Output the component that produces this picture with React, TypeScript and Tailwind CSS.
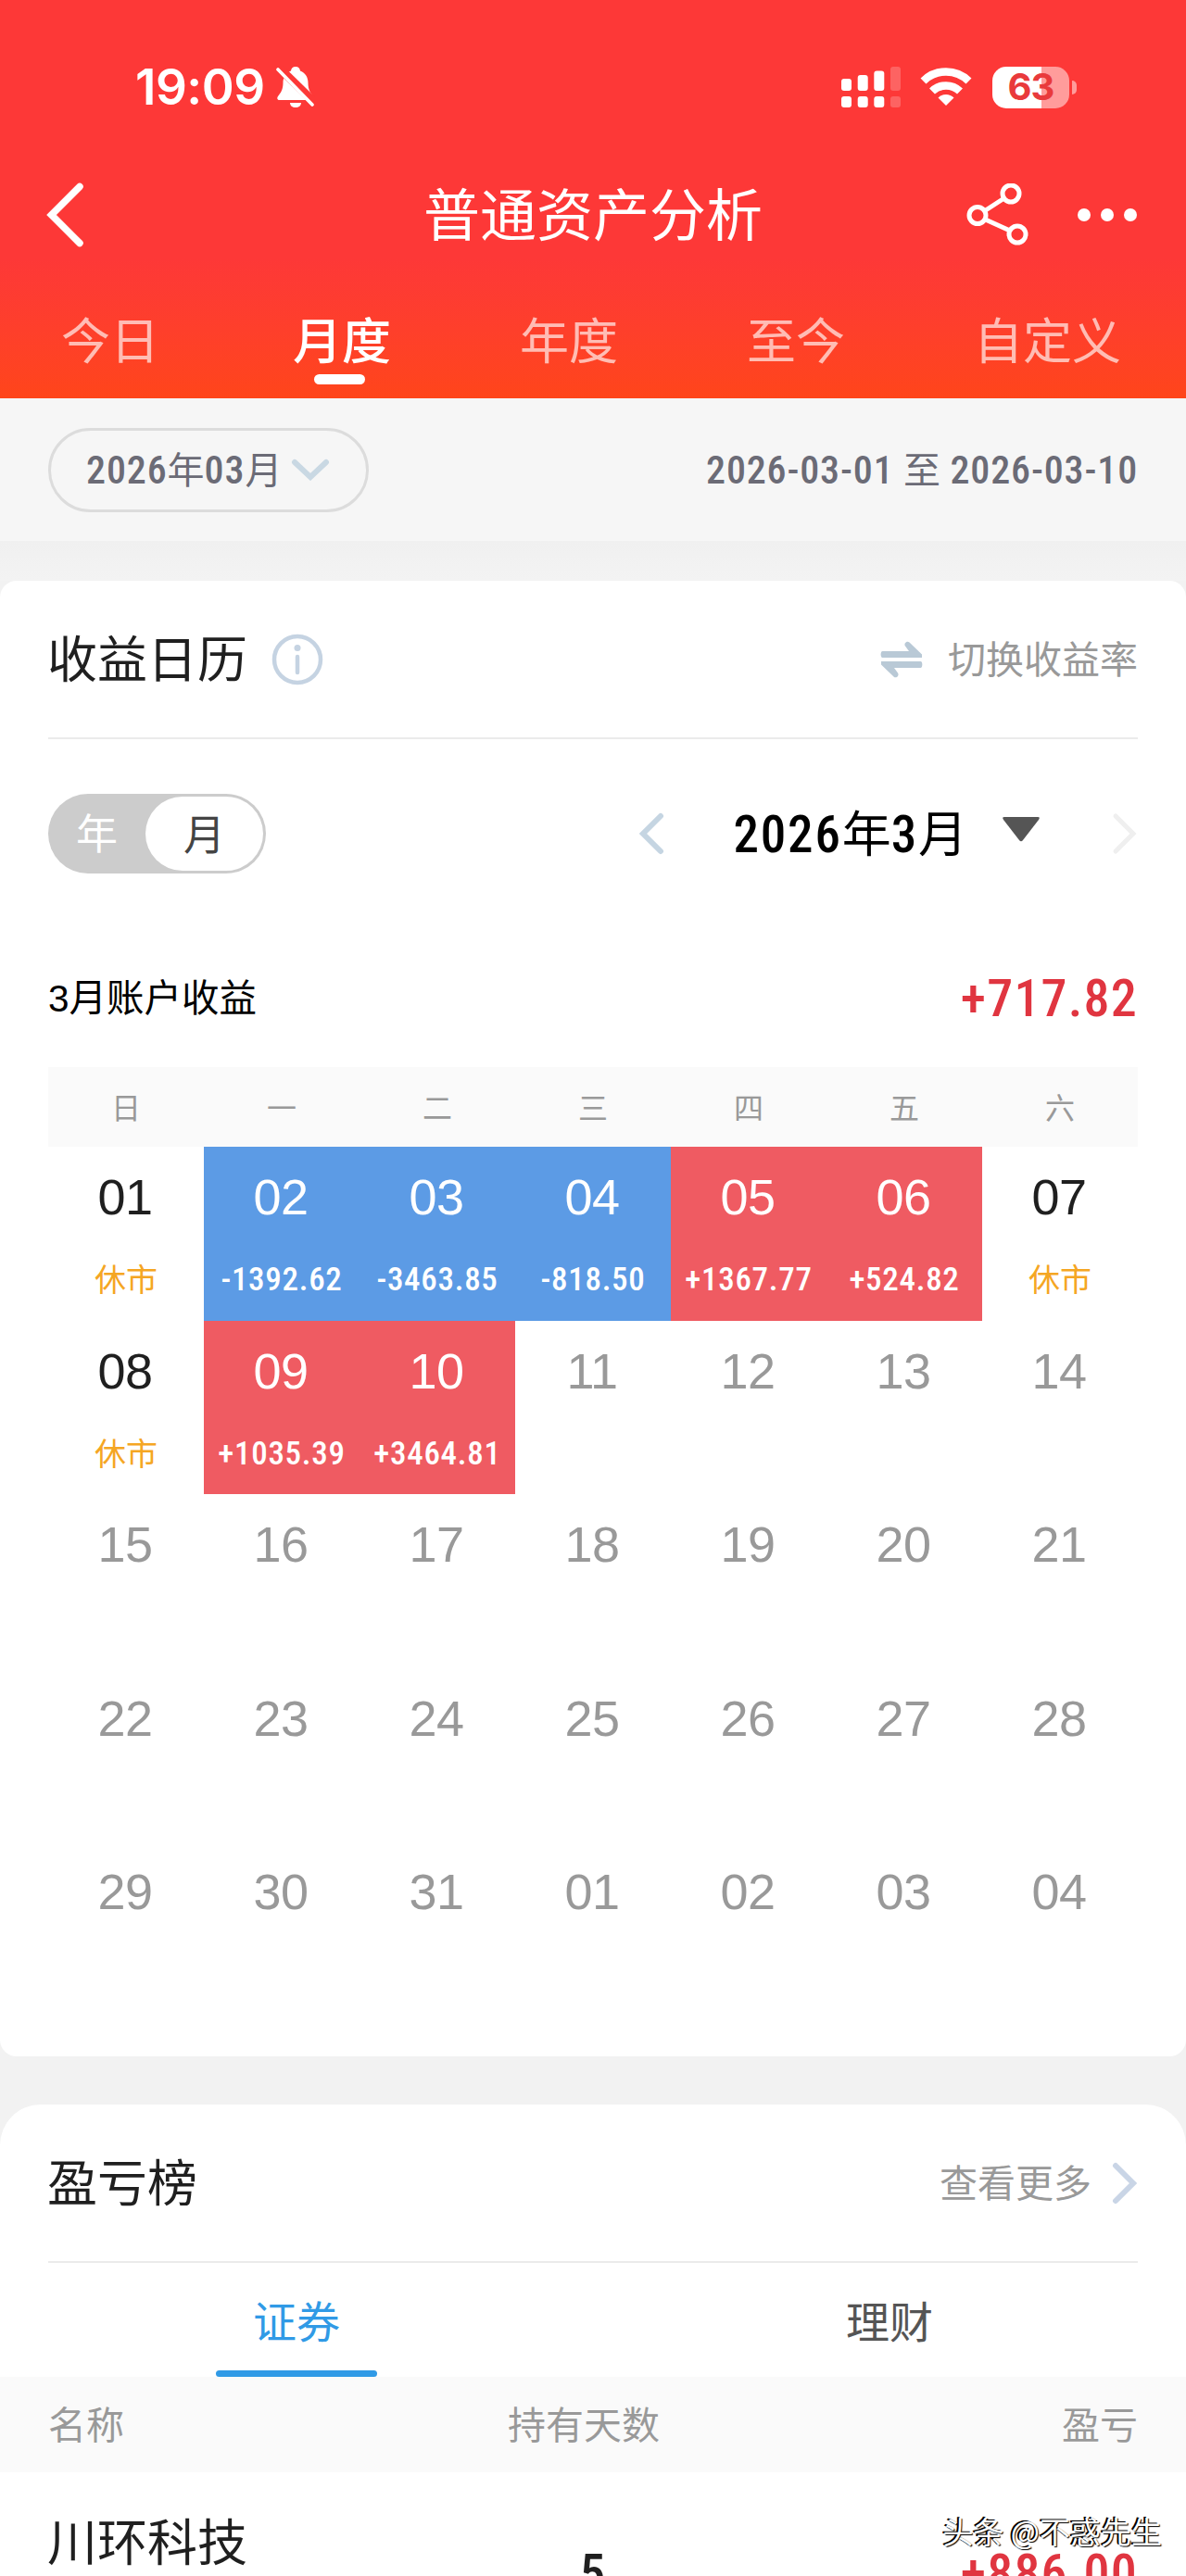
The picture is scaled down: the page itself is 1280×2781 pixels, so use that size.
import clsx from 'clsx'

type DayCell = {
  day: string
  value?: string
  kind: 'rest' | 'up' | 'down' | 'future'
}

const PERIODS = ['今日', '月度', '年度', '至今', '自定义']
const WEEKDAYS = ['日', '一', '二', '三', '四', '五', '六']

const MARKED: DayCell[] = [
  { day: '01', value: '休市', kind: 'rest' },
  { day: '02', value: '-1392.62', kind: 'down' },
  { day: '03', value: '-3463.85', kind: 'down' },
  { day: '04', value: '-818.50', kind: 'down' },
  { day: '05', value: '+1367.77', kind: 'up' },
  { day: '06', value: '+524.82', kind: 'up' },
  { day: '07', value: '休市', kind: 'rest' },
  { day: '08', value: '休市', kind: 'rest' },
  { day: '09', value: '+1035.39', kind: 'up' },
  { day: '10', value: '+3464.81', kind: 'up' },
]

const FUTURE = [
  '11', '12', '13', '14', '15', '16', '17', '18', '19', '20', '21', '22', '23',
  '24', '25', '26', '27', '28', '29', '30', '31', '01', '02', '03', '04',
]

const DAYS: DayCell[] = [...MARKED, ...FUTURE.map((day) => ({ day, kind: 'future' as const }))]

// condensed digits, used for every amount and date
const NUM = 'font-[Roboto,sans-serif] font-medium [font-stretch:80%]'
const HAN = "font-['Noto_Sans_CJK_SC',sans-serif] font-normal tracking-normal"

function Chevron({ className, dir = 'right', width = 6 }: { className?: string; dir?: 'left' | 'right'; width?: number }) {
  return (
    <svg className={className} viewBox="0 0 28 46" fill="none" stroke="currentColor" strokeWidth={width} strokeLinecap="round" strokeLinejoin="miter">
      <path d={dir === 'left' ? 'M24 4 5 23l19 19' : 'M4 4l19 19L4 42'} />
    </svg>
  )
}

function StatusBar() {
  return (
    <div className="flex h-[188px] items-center justify-between pr-[118px] pl-[146px] text-white">
      <div className="flex items-center gap-[12px]">
        <span className="font-[Inter,sans-serif] text-[53px] leading-none font-semibold tracking-[-0.500px]">19:09</span>
        <svg className="h-[46px] w-[42px]" viewBox="0 0 42 46">
          <path
            fill="currentColor"
            d="M21 1c-3 0-4.800 2-5 4.600C10 8 7.500 13 7.500 18.500 7.500 26 5 29 2 33c-1.500 2-.5 4 1.500 4h35c2 0 3-2 1.500-4-3-4-5.500-7-5.500-14.500C34.500 13 32 8 26 5.600 25.800 3 24 1 21 1zM15 40h12c0 3-2.600 5-6 5s-6-2-6-5z"
          />
          <path d="M0 -1 44 42" stroke="#fd3837" strokeWidth="9" />
          <path d="M2 4 39 42" stroke="currentColor" strokeWidth="3.600" strokeLinecap="round" />
        </svg>
      </div>
      <div className="flex items-center">
        <svg className="h-[44px] w-[64px]" viewBox="0 0 64 44" fill="currentColor">
          <rect x="0" y="13" width="11" height="13" rx="3" />
          <rect x="17.700" y="9" width="11" height="17" rx="3" />
          <rect x="35.300" y="4.500" width="11" height="21.500" rx="3" />
          <rect x="53" y="0" width="11" height="26" rx="3" opacity=".22" />
          <rect x="0" y="32" width="11" height="12" rx="3" />
          <rect x="17.700" y="32" width="11" height="12" rx="3" />
          <rect x="35.300" y="32" width="11" height="12" rx="3" />
          <rect x="53" y="32" width="11" height="12" rx="3" opacity=".22" />
        </svg>
        <svg className="ml-[21px] h-[42px] w-[56px]" viewBox="0 0 56 42" fill="none" stroke="currentColor" strokeWidth="8.500">
          <path d="M3.500 14.500a35 35 0 0 1 49 0" />
          <path d="M13 25.500a21.500 21.500 0 0 1 30 0" />
          <path d="M28 41 19.500 32.500a12 12 0 0 1 17 0z" fill="currentColor" stroke="none" />
        </svg>
        <div className="ml-[22px] flex h-[45px] w-[83px] items-center justify-center rounded-[15px] bg-linear-to-r from-white from-64% to-[#ff9c9b] to-64%">
          <span className="font-[Inter,sans-serif] text-[40px] leading-none font-bold tracking-[-1px] text-[#e93a3c]">63</span>
        </div>
        <div className="ml-[3px] h-[15px] w-[5px] rounded-r-full bg-[#ff9c9b]" />
      </div>
    </div>
  )
}

function Header() {
  return (
    <header className="h-[430px] bg-linear-to-b from-[#fd3837] from-65% to-[#ff451a]">
      <StatusBar />
      <div className="flex h-[88px] items-center px-[50px] text-white">
        <div className="flex-1">
          <svg className="h-[72px] w-[42px]" viewBox="0 0 42 72" fill="none" stroke="currentColor" strokeWidth="7.500" strokeLinecap="round">
            <path d="M36 5.500 5.500 36 36 66.500" />
          </svg>
        </div>
        <h1 className="pb-[7px] text-[61px] leading-none">普通资产分析</h1>
        <div className="flex flex-1 items-center justify-end gap-[52px]">
          <svg className="h-[68px] w-[68px]" viewBox="0 0 68 68" fill="none" stroke="currentColor" strokeWidth="5">
            <circle cx="48" cy="11" r="9" />
            <circle cx="12" cy="34.500" r="9" />
            <circle cx="55" cy="55" r="9" />
            <path d="M40 16.500 20 29.500M20.500 39 47 51" />
          </svg>
          <div className="flex items-center gap-[11px] pr-[3px]">
            <span className="size-[14px] rounded-full bg-white" />
            <span className="size-[14px] rounded-full bg-white" />
            <span className="size-[14px] rounded-full bg-white" />
          </div>
        </div>
      </div>
      <nav className="mt-[58px] flex justify-between pr-[70px] pl-[66px] text-[53px] leading-[62px]">
        {PERIODS.map((name) => (
          <div key={name} className="flex flex-col items-center">
            <span className={name === '月度' ? 'pl-[5px] font-medium text-white' : 'text-white/65'}>{name}</span>
            {name === '月度' && <span className="mt-[8px] h-[11px] w-[55px] rounded-full bg-white" />}
          </div>
        ))}
      </nav>
    </header>
  )
}

function FilterBar() {
  return (
    <div className="flex h-[154px] items-center justify-between bg-[#f6f6f6] px-[52px] text-[#6b6b76]">
      <div className="flex h-[91px] w-[346px] items-center gap-[10px] rounded-full border-[3px] border-[#dcdcdc] pl-[38px]">
        <span className={clsx(NUM, 'text-[42px] leading-none tracking-[0.900px]')}>
          2026<span className={clsx(HAN, 'text-[40px]')}>年</span>03<span className={clsx(HAN, 'text-[40px]')}>月</span>
        </span>
        <svg className="h-[24px] w-[42px] text-[#c9d8e3]" viewBox="0 0 42 24" fill="none" stroke="currentColor" strokeWidth="6" strokeLinecap="round">
          <path d="M4 4l17 16L38 4" />
        </svg>
      </div>
      <span className={clsx(NUM, 'text-[42px] leading-none tracking-[0.850px]')}>
        2026-03-01 <span className={clsx(HAN, 'text-[40px]')}>至</span> 2026-03-10
      </span>
    </div>
  )
}

function Day({ cell }: { cell: DayCell }) {
  return (
    <div
      className={clsx(
        'flex flex-col items-center pt-[24px]',
        cell.kind === 'rest' && 'text-[#1f1f1f]',
        cell.kind === 'future' && 'text-[#999]',
        cell.kind === 'up' && 'bg-[#ef5b62] text-white',
        cell.kind === 'down' && 'bg-[#5c9be5] text-white',
      )}
    >
      <span className="pr-[2px] font-['Liberation_Sans',sans-serif] text-[54px] leading-[60px] tracking-[-0.500px]">{cell.day}</span>
      {cell.kind === 'rest' && <span className="mt-[36px] text-[34px] leading-[44px] text-[#f5a623]">{cell.value}</span>}
      {(cell.kind === 'up' || cell.kind === 'down') && (
        <span className={clsx(NUM, 'mt-[38px] text-[35px] leading-[44px] tracking-[0.700px]')}>{cell.value}</span>
      )}
    </div>
  )
}

function CalendarCard() {
  return (
    <section className="h-[1593px] rounded-[18px] bg-white px-[52px]">
      <div className="flex h-[171px] items-center justify-between border-b-2 border-[#ebebeb]">
        <div className="flex items-center gap-[26px]">
          <h2 className="-ml-[1px] pb-[6px] text-[54px] leading-none text-[#1f1f1f]">收益日历</h2>
          <svg className="size-[56px] text-[#c5d3e2]" viewBox="0 0 56 56" fill="none" stroke="currentColor" strokeWidth="4.500" strokeLinecap="round">
            <circle cx="28" cy="28" r="25" />
            <path d="M28 25v17" />
            <circle cx="28" cy="15.500" r="3.500" fill="currentColor" stroke="none" />
          </svg>
        </div>
        <div className="flex items-center gap-[27px]">
          <svg className="h-[42px] w-[46px] text-[#b9c9d6]" viewBox="0 0 46 42" fill="currentColor">
            <path d="M2.500 12H31l-4-5.500c-2-3 2-6.500 4.500-4L45 15.500V19H2.500C0 19 0 12 2.500 12z" />
            <path d="M43.500 30H15l4 5.500c2 3-2 6.500-4.500 4L1 26.500V23h42.500c2.500 0 2.500 7 0 7z" />
          </svg>
          <span className="pb-[4px] text-[41px] leading-none text-[#999]">切换收益率</span>
        </div>
      </div>

      <div className="mt-[59px] flex h-[86px] items-center justify-between">
        <div className="flex h-[86px] w-[235px] items-center rounded-full bg-[#ccc] p-[3px] text-[45px] leading-none">
          <span className="flex-1 pr-[3px] pb-[5px] text-center text-white">年</span>
          <span className="flex h-[80px] w-[127px] items-center justify-center rounded-full bg-white pb-[4px] text-[#444]">月</span>
        </div>
        <div className="flex items-center">
          <Chevron dir="left" className="h-[46px] w-[28px] text-[#c5d5e2]" />
          <span className={clsx(NUM, 'ml-[74px] text-[55px] leading-none tracking-[1.800px] text-black')}>
            2026<span className={clsx(HAN, 'text-[53px]')}>年</span>3<span className={clsx(HAN, 'text-[53px]')}>月</span>
          </span>
          <svg className="mb-[10px] ml-[38px] h-[27px] w-[40px]" viewBox="0 0 40 27">
            <path d="M2 0h36q3 0 1 3L22 25q-2 2.500-4 0L1 3Q-1 0 2 0z" fill="#555" />
          </svg>
          <Chevron className="ml-[78px] h-[46px] w-[28px] text-[#efefef]" width={5} />
        </div>
      </div>

      <div className="mt-[99px] flex h-[72px] items-center justify-between">
        <span className="font-['Liberation_Sans','Noto_Sans_CJK_SC',sans-serif] text-[40.500px] leading-none text-black">3月账户收益</span>
        <span className={clsx(NUM, 'text-[56px] leading-none tracking-[1.200px] text-[#e03540]')}>+717.82</span>
      </div>

      <div className="mt-[38px] grid h-[86px] grid-cols-7 items-center bg-[#fafafa] pb-[3px] text-center text-[32px] text-[#999]">
        {WEEKDAYS.map((d) => (
          <span key={d}>{d}</span>
        ))}
      </div>
      <div className="grid h-[938px] grid-cols-7 grid-rows-5">
        {DAYS.map((cell, i) => (
          <Day key={i} cell={cell} />
        ))}
      </div>
    </section>
  )
}

function RankCard() {
  return (
    <section className="mt-[52px] h-[509px] rounded-t-[44px] bg-white">
      <div className="mx-[52px] flex h-[171px] items-center justify-between border-b-2 border-[#ebebeb]">
        <h2 className="-ml-[1px] pb-[6px] text-[54px] leading-none text-[#1f1f1f]">盈亏榜</h2>
        <div className="flex items-center gap-[22px]">
          <span className="pb-[4px] text-[41px] leading-none text-[#999]">查看更多</span>
          <Chevron className="h-[46px] w-[28px] text-[#c9d5e6]" />
        </div>
      </div>
      <div className="flex h-[123px] text-[47px] leading-none">
        <div className="flex flex-1 flex-col items-center justify-between pt-[37px] text-[#309ae6]">
          <span>证券</span>
          <span className="h-[7px] w-[174px] rounded-full bg-[#309ae6]" />
        </div>
        <div className="flex-1 pt-[37px] text-center text-[#555]">理财</div>
      </div>
      <div className="flex h-[103px] items-center justify-between bg-[#fafafa] px-[52px] pb-[4px] text-[41px] leading-none text-[#999]">
        <span className="flex-1">名称</span>
        <span>持有天数</span>
        <span className="flex-1 pl-[20px] text-right">盈亏</span>
      </div>
      <div className="relative flex items-start px-[52px]">
        <span className="-ml-[1px] flex-1 pt-[45px] text-[54px] leading-[56px] text-[#1f1f1f]">川环科技</span>
        <span className={clsx(NUM, 'pt-[79px] text-[55px] leading-[60px] text-[#1f1f1f]')}>5</span>
        <span className={clsx(NUM, 'flex-1 pt-[79px] text-right text-[56px] leading-[60px] tracking-[1.200px] text-[#e03540]')}>+886.00</span>
        <span className="absolute top-[43px] right-[26px] text-[33px] leading-[40px] text-white [text-shadow:-2px_-1px_0_#000,1px_1px_1px_#000]">
          头条 @不惑先生
        </span>
      </div>
    </section>
  )
}

export default function App() {
  return (
    <div className="h-[2781px] w-[1280px] overflow-hidden bg-[#f2f2f2] font-['Noto_Sans_CJK_SC',sans-serif]">
      <Header />
      <FilterBar />
      <div className="h-[43px] bg-linear-to-b from-[#f0f0f0] to-[#f3f3f3]" />
      <CalendarCard />
      <RankCard />
    </div>
  )
}
